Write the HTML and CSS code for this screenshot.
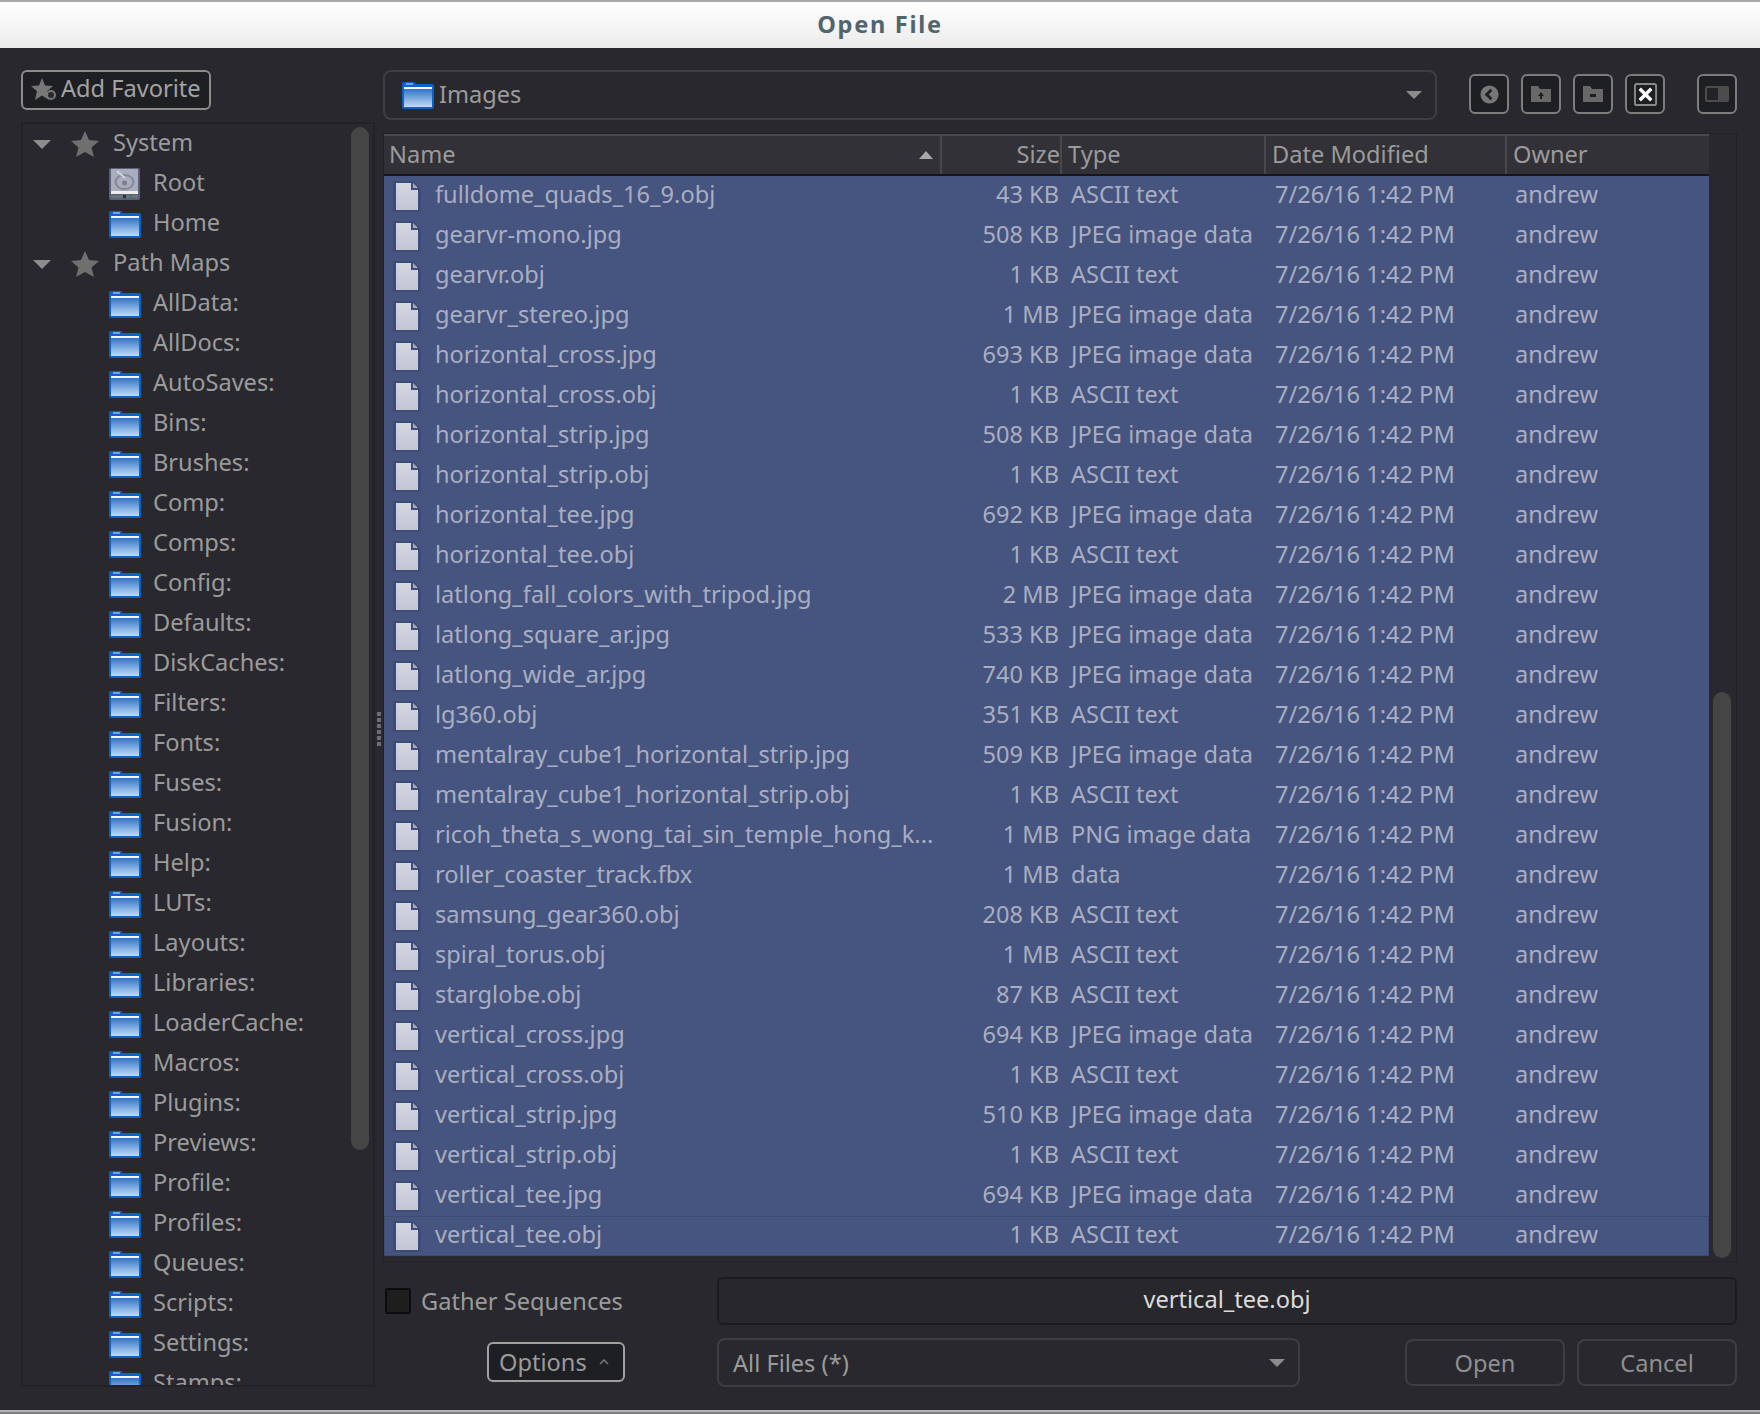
FILE: index.html
```html
<!DOCTYPE html>
<html lang="en">
<head>
  <meta charset="UTF-8">
  <title>Open File</title>
  <link rel="stylesheet" href="styles.css">
</head>
<body>

<svg class="sprites" aria-hidden="true">
  <defs>
    <linearGradient id="folderFill" x1="0" y1="0" x2="0" y2="1">
      <stop offset="0" stop-color="#2f74c8"/>
      <stop offset="1" stop-color="#c3daf5"/>
    </linearGradient>
    <linearGradient id="pageFill" x1="0" y1="0" x2="0" y2="1">
      <stop offset="0" stop-color="#d4d6e2"/>
      <stop offset="1" stop-color="#c2c6d6"/>
    </linearGradient>
    <symbol id="folder" viewBox="0 0 32 28">
      <path d="M2 1h10l2 2h16a2 2 0 0 1 2 2v21a2 2 0 0 1-2 2H2a2 2 0 0 1-2-2V3a2 2 0 0 1 2-2z" fill="#0b62c9"/>
      <rect x="2" y="8" width="28" height="18" fill="url(#folderFill)"/>
      <rect x="2" y="6" width="28" height="2" fill="#f2f6fc"/>
      <rect x="4" y="2" width="7" height="2" fill="#6ea3e3"/>
    </symbol>
    <symbol id="page" viewBox="0 0 28 31">
      <path d="M0 0h20l8 8v23H0z" fill="#3f4c77"/>
      <path d="M3 2h15v7h7v20H3z" fill="url(#pageFill)"/>
      <path d="M20 2l5 5h-5z" fill="#a4a8bc"/>
    </symbol>
    <symbol id="star" viewBox="0 0 28 28">
      <path d="M14 1l4 9 10 1-7.500 6.500L23 27l-9-5-9 5 2.500-9.500L0 11l10-1z" fill="#6f6f6f"/>
    </symbol>
    <symbol id="disk" viewBox="0 0 31 32">
      <rect width="31" height="32" rx="2" fill="#59617a"/>
      <rect x="2" y="1" width="27" height="22" fill="#a9adbd"/>
      <ellipse cx="15.500" cy="14" rx="9" ry="7" fill="none" stroke="#84889a" stroke-width="2"/>
      <circle cx="15.500" cy="15" r="2.500" fill="#7b7f90"/>
      <path d="M8 3l8 7" stroke="#d0d3de" stroke-width="2"/>
      <rect x="2" y="23" width="27" height="3" fill="#eceded"/>
      <rect x="2" y="27" width="27" height="3" fill="#6d7180"/>
      <rect x="14" y="27" width="3" height="3" fill="#2e3038"/>
      <rect x="20" y="27" width="3" height="3" fill="#4c7a52"/>
    </symbol>
  </defs>
</svg>

<div class="dialog">
  <div class="titlebar">Open File</div>

  <div class="content">
    <div class="left">
      <button class="btn-fav">
        <svg class="fav-icon" viewBox="0 0 26 26">
          <path d="M11 1l3 7.500 8 .6-6 5.200L18 23l-7-4.500L4 23l2-8.700-6-5.200 8-.6z" fill="#777"/>
          <circle cx="20" cy="18" r="4" fill="#28282e" stroke="#777" stroke-width="2"/>
        </svg>
        Add Favorite
      </button>

      <div class="tree">
        <div class="tree-rows">
          <div class="tree-head"><span class="twisty"></span><svg class="star"><use href="#star"/></svg>System</div>
          <div class="tree-item"><svg class="disk"><use href="#disk"/></svg>Root</div>
          <div class="tree-item"><svg class="folder"><use href="#folder"/></svg>Home</div>
          <div class="tree-head"><span class="twisty"></span><svg class="star"><use href="#star"/></svg>Path Maps</div>
          <div class="tree-item"><svg class="folder"><use href="#folder"/></svg>AllData:</div>
          <div class="tree-item"><svg class="folder"><use href="#folder"/></svg>AllDocs:</div>
          <div class="tree-item"><svg class="folder"><use href="#folder"/></svg>AutoSaves:</div>
          <div class="tree-item"><svg class="folder"><use href="#folder"/></svg>Bins:</div>
          <div class="tree-item"><svg class="folder"><use href="#folder"/></svg>Brushes:</div>
          <div class="tree-item"><svg class="folder"><use href="#folder"/></svg>Comp:</div>
          <div class="tree-item"><svg class="folder"><use href="#folder"/></svg>Comps:</div>
          <div class="tree-item"><svg class="folder"><use href="#folder"/></svg>Config:</div>
          <div class="tree-item"><svg class="folder"><use href="#folder"/></svg>Defaults:</div>
          <div class="tree-item"><svg class="folder"><use href="#folder"/></svg>DiskCaches:</div>
          <div class="tree-item"><svg class="folder"><use href="#folder"/></svg>Filters:</div>
          <div class="tree-item"><svg class="folder"><use href="#folder"/></svg>Fonts:</div>
          <div class="tree-item"><svg class="folder"><use href="#folder"/></svg>Fuses:</div>
          <div class="tree-item"><svg class="folder"><use href="#folder"/></svg>Fusion:</div>
          <div class="tree-item"><svg class="folder"><use href="#folder"/></svg>Help:</div>
          <div class="tree-item"><svg class="folder"><use href="#folder"/></svg>LUTs:</div>
          <div class="tree-item"><svg class="folder"><use href="#folder"/></svg>Layouts:</div>
          <div class="tree-item"><svg class="folder"><use href="#folder"/></svg>Libraries:</div>
          <div class="tree-item"><svg class="folder"><use href="#folder"/></svg>LoaderCache:</div>
          <div class="tree-item"><svg class="folder"><use href="#folder"/></svg>Macros:</div>
          <div class="tree-item"><svg class="folder"><use href="#folder"/></svg>Plugins:</div>
          <div class="tree-item"><svg class="folder"><use href="#folder"/></svg>Previews:</div>
          <div class="tree-item"><svg class="folder"><use href="#folder"/></svg>Profile:</div>
          <div class="tree-item"><svg class="folder"><use href="#folder"/></svg>Profiles:</div>
          <div class="tree-item"><svg class="folder"><use href="#folder"/></svg>Queues:</div>
          <div class="tree-item"><svg class="folder"><use href="#folder"/></svg>Scripts:</div>
          <div class="tree-item"><svg class="folder"><use href="#folder"/></svg>Settings:</div>
          <div class="tree-item"><svg class="folder"><use href="#folder"/></svg>Stamps:</div>
        </div>
        <div class="tree-scroll"></div>
      </div>
    </div>

    <div class="splitter"><span></span><span></span><span></span><span></span><span></span><span></span></div>

    <div class="right">
      <div class="toolbar">
        <div class="combo combo-path">
          <svg class="folder"><use href="#folder"/></svg>
          <span class="combo-text">Images</span>
          <span class="arrow"></span>
        </div>
        <div class="tools">
          <button class="tool">
            <svg class="tool-back" viewBox="0 0 20 20"><circle cx="10" cy="10" r="9.500" fill="#777"/><path d="M12 5l-5 5 5 5" fill="none" stroke="#1f2024" stroke-width="3"/></svg>
          </button>
          <button class="tool">
            <svg viewBox="0 0 22 18"><path d="M1 1h7l2 3h11v13H1z" fill="#686868"/><path d="M11 7l-3 4h6z" fill="#1f2024"/><rect x="10" y="10" width="2" height="4" fill="#1f2024"/></svg>
          </button>
          <button class="tool">
            <svg viewBox="0 0 22 18"><path d="M1 1h7l2 3h11v13H1z" fill="#686868"/><rect x="8" y="9" width="6" height="3" fill="#1f2024"/></svg>
          </button>
          <button class="tool">
            <svg class="tool-close" viewBox="0 0 26 26"><rect x="2" y="2" width="22" height="22" rx="2" fill="none" stroke="#8a8a8a" stroke-width="2"/><path d="M7 7l12 12M19 7L7 19" stroke="#fff" stroke-width="3.500"/></svg>
          </button>
          <button class="tool tool-panel">
            <svg class="tool-side" viewBox="0 0 24 16"><rect width="24" height="16" rx="2" fill="#4c4c4c"/><rect x="2" y="2" width="11" height="12" fill="#232327"/></svg>
          </button>
        </div>
      </div>

      <div class="files">
        <div class="files-main">
          <div class="file-head">
            <div class="col-name">Name<span class="sort"></span></div>
            <div class="col-size">Size</div>
            <div class="col-type">Type</div>
            <div class="col-date">Date Modified</div>
            <div class="col-owner">Owner</div>
          </div>
          <div class="file-row"><div class="name"><svg class="page"><use href="#page"/></svg>fulldome_quads_16_9.obj</div><div class="size">43 KB</div><div>ASCII text</div><div>7/26/16 1:42 PM</div><div class="owner">andrew</div></div>
          <div class="file-row"><div class="name"><svg class="page"><use href="#page"/></svg>gearvr-mono.jpg</div><div class="size">508 KB</div><div>JPEG image data</div><div>7/26/16 1:42 PM</div><div class="owner">andrew</div></div>
          <div class="file-row"><div class="name"><svg class="page"><use href="#page"/></svg>gearvr.obj</div><div class="size">1 KB</div><div>ASCII text</div><div>7/26/16 1:42 PM</div><div class="owner">andrew</div></div>
          <div class="file-row"><div class="name"><svg class="page"><use href="#page"/></svg>gearvr_stereo.jpg</div><div class="size">1 MB</div><div>JPEG image data</div><div>7/26/16 1:42 PM</div><div class="owner">andrew</div></div>
          <div class="file-row"><div class="name"><svg class="page"><use href="#page"/></svg>horizontal_cross.jpg</div><div class="size">693 KB</div><div>JPEG image data</div><div>7/26/16 1:42 PM</div><div class="owner">andrew</div></div>
          <div class="file-row"><div class="name"><svg class="page"><use href="#page"/></svg>horizontal_cross.obj</div><div class="size">1 KB</div><div>ASCII text</div><div>7/26/16 1:42 PM</div><div class="owner">andrew</div></div>
          <div class="file-row"><div class="name"><svg class="page"><use href="#page"/></svg>horizontal_strip.jpg</div><div class="size">508 KB</div><div>JPEG image data</div><div>7/26/16 1:42 PM</div><div class="owner">andrew</div></div>
          <div class="file-row"><div class="name"><svg class="page"><use href="#page"/></svg>horizontal_strip.obj</div><div class="size">1 KB</div><div>ASCII text</div><div>7/26/16 1:42 PM</div><div class="owner">andrew</div></div>
          <div class="file-row"><div class="name"><svg class="page"><use href="#page"/></svg>horizontal_tee.jpg</div><div class="size">692 KB</div><div>JPEG image data</div><div>7/26/16 1:42 PM</div><div class="owner">andrew</div></div>
          <div class="file-row"><div class="name"><svg class="page"><use href="#page"/></svg>horizontal_tee.obj</div><div class="size">1 KB</div><div>ASCII text</div><div>7/26/16 1:42 PM</div><div class="owner">andrew</div></div>
          <div class="file-row"><div class="name"><svg class="page"><use href="#page"/></svg>latlong_fall_colors_with_tripod.jpg</div><div class="size">2 MB</div><div>JPEG image data</div><div>7/26/16 1:42 PM</div><div class="owner">andrew</div></div>
          <div class="file-row"><div class="name"><svg class="page"><use href="#page"/></svg>latlong_square_ar.jpg</div><div class="size">533 KB</div><div>JPEG image data</div><div>7/26/16 1:42 PM</div><div class="owner">andrew</div></div>
          <div class="file-row"><div class="name"><svg class="page"><use href="#page"/></svg>latlong_wide_ar.jpg</div><div class="size">740 KB</div><div>JPEG image data</div><div>7/26/16 1:42 PM</div><div class="owner">andrew</div></div>
          <div class="file-row"><div class="name"><svg class="page"><use href="#page"/></svg>lg360.obj</div><div class="size">351 KB</div><div>ASCII text</div><div>7/26/16 1:42 PM</div><div class="owner">andrew</div></div>
          <div class="file-row"><div class="name"><svg class="page"><use href="#page"/></svg>mentalray_cube1_horizontal_strip.jpg</div><div class="size">509 KB</div><div>JPEG image data</div><div>7/26/16 1:42 PM</div><div class="owner">andrew</div></div>
          <div class="file-row"><div class="name"><svg class="page"><use href="#page"/></svg>mentalray_cube1_horizontal_strip.obj</div><div class="size">1 KB</div><div>ASCII text</div><div>7/26/16 1:42 PM</div><div class="owner">andrew</div></div>
          <div class="file-row"><div class="name"><svg class="page"><use href="#page"/></svg>ricoh_theta_s_wong_tai_sin_temple_hong_k...</div><div class="size">1 MB</div><div>PNG image data</div><div>7/26/16 1:42 PM</div><div class="owner">andrew</div></div>
          <div class="file-row"><div class="name"><svg class="page"><use href="#page"/></svg>roller_coaster_track.fbx</div><div class="size">1 MB</div><div>data</div><div>7/26/16 1:42 PM</div><div class="owner">andrew</div></div>
          <div class="file-row"><div class="name"><svg class="page"><use href="#page"/></svg>samsung_gear360.obj</div><div class="size">208 KB</div><div>ASCII text</div><div>7/26/16 1:42 PM</div><div class="owner">andrew</div></div>
          <div class="file-row"><div class="name"><svg class="page"><use href="#page"/></svg>spiral_torus.obj</div><div class="size">1 MB</div><div>ASCII text</div><div>7/26/16 1:42 PM</div><div class="owner">andrew</div></div>
          <div class="file-row"><div class="name"><svg class="page"><use href="#page"/></svg>starglobe.obj</div><div class="size">87 KB</div><div>ASCII text</div><div>7/26/16 1:42 PM</div><div class="owner">andrew</div></div>
          <div class="file-row"><div class="name"><svg class="page"><use href="#page"/></svg>vertical_cross.jpg</div><div class="size">694 KB</div><div>JPEG image data</div><div>7/26/16 1:42 PM</div><div class="owner">andrew</div></div>
          <div class="file-row"><div class="name"><svg class="page"><use href="#page"/></svg>vertical_cross.obj</div><div class="size">1 KB</div><div>ASCII text</div><div>7/26/16 1:42 PM</div><div class="owner">andrew</div></div>
          <div class="file-row"><div class="name"><svg class="page"><use href="#page"/></svg>vertical_strip.jpg</div><div class="size">510 KB</div><div>JPEG image data</div><div>7/26/16 1:42 PM</div><div class="owner">andrew</div></div>
          <div class="file-row"><div class="name"><svg class="page"><use href="#page"/></svg>vertical_strip.obj</div><div class="size">1 KB</div><div>ASCII text</div><div>7/26/16 1:42 PM</div><div class="owner">andrew</div></div>
          <div class="file-row"><div class="name"><svg class="page"><use href="#page"/></svg>vertical_tee.jpg</div><div class="size">694 KB</div><div>JPEG image data</div><div>7/26/16 1:42 PM</div><div class="owner">andrew</div></div>
          <div class="file-row current"><div class="name"><svg class="page"><use href="#page"/></svg>vertical_tee.obj</div><div class="size">1 KB</div><div>ASCII text</div><div>7/26/16 1:42 PM</div><div class="owner">andrew</div></div>
        </div>
        <div class="files-scroll"><div class="files-thumb"></div></div>
      </div>

      <div class="bottom">
        <label class="gather"><span class="check"></span>Gather Sequences</label>
        <div class="filename">vertical_tee.obj</div>
        <div class="options-wrap"><button class="btn-options">Options<svg class="caret" viewBox="0 0 10 6"><path d="M1 5l4-4 4 4" fill="none" stroke="#777" stroke-width="1.500"/></svg></button></div>
        <div class="combo combo-filter">
          <span class="combo-text">All Files (*)</span>
          <span class="arrow"></span>
        </div>
        <div class="actions">
          <button class="btn">Open</button>
          <button class="btn">Cancel</button>
        </div>
      </div>
    </div>
  </div>

  <div class="frame-bottom"></div>
</div>

</body>
</html>
```

FILE: styles.css
```css
* {
  box-sizing: border-box;
}

body {
  margin: 0;
  background-color: #28282e;
  font-family: "Noto Sans", sans-serif;
  font-size: 23.6px;
  color: #9b9b9b;
}

button {
  font-family: inherit;
  font-size: inherit;
  color: inherit;
  padding: 0;
}

.sprites {
  position: absolute;
  width: 0;
  height: 0;
}

.dialog {
  width: 1760px;
  height: 1414px;
  display: flex;
  flex-direction: column;
  overflow: hidden;
}

.titlebar {
  height: 48px;
  flex: none;
  border-top: 2px solid #a9a9a9;
  background: linear-gradient(#ffffff, #ebebeb);
  color: #52646c;
  font-weight: 700;
  letter-spacing: 1.7px;
  text-align: center;
  line-height: 44px;
}

.content {
  flex: 1;
  min-height: 0;
  display: flex;
  padding: 22px 23px 23px 21px;
}

.left {
  width: 354px;
  flex: none;
  display: flex;
  flex-direction: column;
}

.btn-fav {
  width: 190px;
  height: 40px;
  flex: none;
  display: flex;
  align-items: center;
  gap: 4px;
  padding: 0 0 4px 8px;
  background-color: #1e1f23;
  border: 2px solid #8c8c8c;
  border-radius: 6px;
  color: #a3a3a3;
  white-space: nowrap;
}

.fav-icon {
  width: 26px;
  height: 26px;
  margin-top: 4px;
}

.tree {
  flex: 1;
  min-height: 0;
  margin-top: 12px;
  display: flex;
  border: 2px solid #212126;
  overflow: hidden;
}

.tree-rows {
  flex: 1;
  min-width: 0;
  overflow: hidden;
}

.tree-head,
.tree-item {
  height: 40px;
  display: flex;
  align-items: center;
  padding-bottom: 4px;
  white-space: nowrap;
}

.tree-head {
  padding-left: 10px;
}

.tree-item {
  padding-left: 86px;
}

.twisty {
  width: 0;
  height: 0;
  margin: 4px 20px 0 0;
  border-left: 9px solid transparent;
  border-right: 9px solid transparent;
  border-top: 9px solid #8c8c8c;
}

.star {
  width: 28px;
  height: 28px;
  margin: 4px 14px 0 0;
}

.folder {
  width: 32px;
  height: 28px;
  margin: 4px 12px 0 0;
  flex: none;
}

.disk {
  width: 31px;
  height: 32px;
  margin: 4px 13px 0 0;
  flex: none;
}

.tree-scroll {
  width: 18px;
  height: 1023px;
  flex: none;
  margin: 3px 4px 0 0;
  background-color: #454545;
  border-radius: 9px;
}

.splitter {
  width: 8px;
  flex: none;
  display: flex;
  flex-direction: column;
  align-items: center;
  justify-content: center;
  gap: 2px;
}

.splitter span {
  width: 4px;
  height: 4px;
  background-color: #6e6e6e;
}

.right {
  flex: 1;
  min-width: 0;
  display: flex;
  flex-direction: column;
}

.toolbar {
  height: 50px;
  flex: none;
  display: flex;
}

.combo {
  display: flex;
  align-items: center;
  border: 2px solid #3d3e44;
  border-radius: 8px;
}

.combo-path {
  width: 1054px;
  padding-left: 17px;
}

.combo-path .folder {
  margin: 0 5px 0 0;
}

.combo-path .combo-text {
  padding-bottom: 3px;
}

.combo-text {
  flex: 1;
  white-space: nowrap;
}

.arrow {
  width: 0;
  height: 0;
  margin-right: 13px;
  border-left: 8px solid transparent;
  border-right: 8px solid transparent;
  border-top: 8px solid #8c8c8c;
}

.tools {
  display: flex;
  gap: 12px;
  margin: 4px 0 0 32px;
}

.tool {
  width: 40px;
  height: 40px;
  display: flex;
  align-items: center;
  justify-content: center;
  background-color: #1e1f23;
  border: 2px solid #7d7d7d;
  border-radius: 6px;
}

.tool svg {
  width: 22px;
  height: 18px;
}

.tool .tool-back {
  width: 19px;
  height: 19px;
}

.tool .tool-close {
  width: 25px;
  height: 25px;
}

.tool .tool-side {
  width: 24px;
  height: 16px;
}

.tool-panel {
  margin-left: 20px;
}

.files {
  height: 1129px;
  flex: none;
  margin-top: 13px;
  display: flex;
  border: 1px solid #212126;
}

.files-main {
  width: 1325px;
  flex: none;
}

.file-head,
.file-row {
  display: grid;
  grid-template-columns: 558px 120px 204px 241px 1fr;
}

.file-head {
  height: 42px;
  background-color: #313137;
  border-top: 2px solid #48484d;
  border-bottom: 2px solid #16161a;
}

.file-head > div {
  display: flex;
  align-items: center;
  padding: 0 0 2px 6px;
  border-right: 2px solid #47474c;
  white-space: nowrap;
}

.file-head .col-owner {
  border-right: none;
}

.file-head .col-name {
  justify-content: space-between;
  padding: 0 7px 2px 5px;
}

.file-head .col-size {
  justify-content: flex-end;
  padding: 0 0 2px 0;
}

.sort {
  width: 0;
  height: 0;
  margin-top: 2px;
  border-left: 7px solid transparent;
  border-right: 7px solid transparent;
  border-bottom: 8px solid #a8a8a8;
}

.file-row {
  height: 40px;
  align-items: center;
  background-color: #465480;
  color: #a9aec0;
  white-space: nowrap;
}

.file-row > div {
  padding: 0 0 4px 9px;
}

.file-row .name {
  display: flex;
  align-items: center;
}

.file-row .size {
  padding: 0 3px 4px 0;
  text-align: right;
}

.file-row .owner {
  padding-left: 8px;
}

.file-row.current {
  outline: 1px solid #3d4a72;
  outline-offset: -1px;
}

.page {
  width: 28px;
  height: 31px;
  margin: 4px 14px 0 0;
  flex: none;
}

.files-scroll {
  flex: 1;
  display: flex;
  flex-direction: column;
  justify-content: flex-end;
  padding: 0 5px 3px 4px;
}

.files-thumb {
  height: 566px;
  background-color: #454545;
  border-radius: 9px;
}

.bottom {
  flex: 1;
  display: grid;
  grid-template-columns: 334px 583px 1fr;
  grid-template-rows: 48px 49px;
  row-gap: 13px;
  padding-top: 15px;
}

.gather {
  display: flex;
  align-items: center;
  padding-left: 2px;
}

.check {
  width: 26px;
  height: 26px;
  margin-right: 10px;
  background-color: #1e1e1f;
  border: 2px solid #0c0c0e;
  border-radius: 3px;
}

.filename {
  grid-column: span 2;
  background-color: #27272c;
  border: 2px solid #1c1c20;
  border-radius: 6px;
  color: #dcdcdc;
  text-align: center;
  line-height: 40px;
}

.options-wrap {
  display: flex;
  justify-content: flex-end;
  padding: 4px 92px 5px 0;
}

.btn-options {
  width: 138px;
  height: 40px;
  display: flex;
  align-items: center;
  gap: 12px;
  padding-left: 10px;
  background-color: #1e1f23;
  border: 2px solid #a0a0a0;
  border-radius: 6px;
}

.caret {
  width: 10px;
  height: 6px;
}

.combo-filter {
  padding-left: 14px;
}

.actions {
  display: flex;
  justify-content: flex-end;
  gap: 12px;
  padding-top: 1px;
}

.btn {
  width: 160px;
  height: 47px;
  background-color: #28282e;
  border: 2px solid #3d3e44;
  border-radius: 8px;
  color: #8f8f8f;
}

.frame-bottom {
  height: 4px;
  flex: none;
  background: linear-gradient(#b3b3b3 50%, #7f7f7f 50%);
}
```
